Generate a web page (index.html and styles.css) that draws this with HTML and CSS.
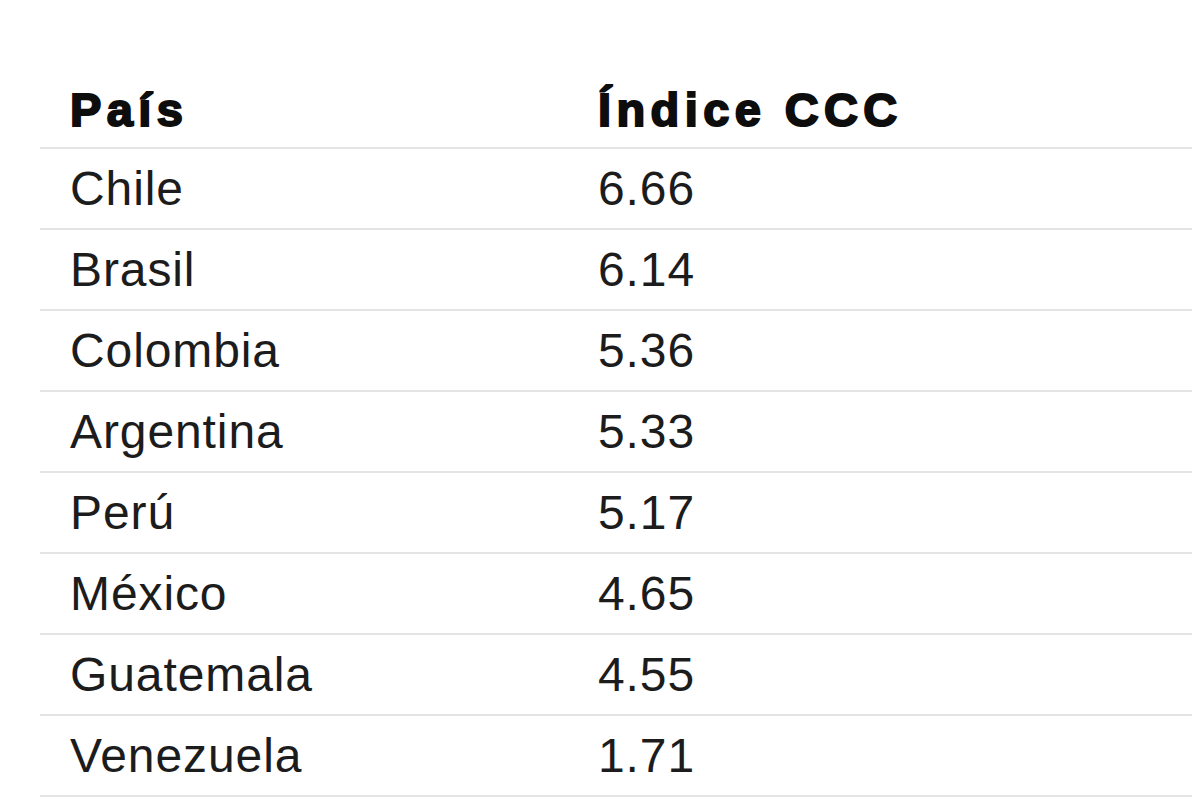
FILE: index.html
```html
<!DOCTYPE html>
<html lang="es">
<head>
<meta charset="utf-8">
<title>Índice CCC</title>
<link rel="stylesheet" href="styles.css">
</head>
<body>
<main class="page">
  <table class="ccc-table">
    <thead>
      <tr><th>País</th><th>Índice CCC</th></tr>
    </thead>
    <tbody>
      <tr><td>Chile</td><td>6.66</td></tr>
      <tr><td>Brasil</td><td>6.14</td></tr>
      <tr><td>Colombia</td><td>5.36</td></tr>
      <tr><td>Argentina</td><td>5.33</td></tr>
      <tr><td>Perú</td><td>5.17</td></tr>
      <tr><td>México</td><td>4.65</td></tr>
      <tr><td>Guatemala</td><td>4.55</td></tr>
      <tr><td>Venezuela</td><td>1.71</td></tr>
    </tbody>
  </table>
</main>
</body>
</html>
```

FILE: styles.css
```css
html, body {
  margin: 0;
  padding: 0;
  background: #ffffff;
}

.page {
  padding: 72px 8px 0 40px;
  font-family: "Liberation Sans", Arial, sans-serif;
  color: #1c1c1c;
}

.ccc-table {
  width: 1152px;
  border-collapse: collapse;
  table-layout: fixed;
}

.ccc-table th,
.ccc-table td {
  text-align: left;
  font-size: 48px;
  line-height: 56px;
  padding: 0 0 0 30px;
  border-bottom: 2px solid #e4e4e4;
}

.ccc-table th:first-child,
.ccc-table td:first-child {
  width: 498px;
}

.ccc-table th {
  font-size: 47px;
  font-weight: 700;
  letter-spacing: 5.4px;
  -webkit-text-stroke: 2px #0d0d0d;
  color: #0d0d0d;
  padding-top: 10px;
  padding-bottom: 9px;
}

.ccc-table td {
  font-weight: 400;
  letter-spacing: 0.9px;
  padding-top: 12px;
  padding-bottom: 11px;
  height: 56px;
}
```
